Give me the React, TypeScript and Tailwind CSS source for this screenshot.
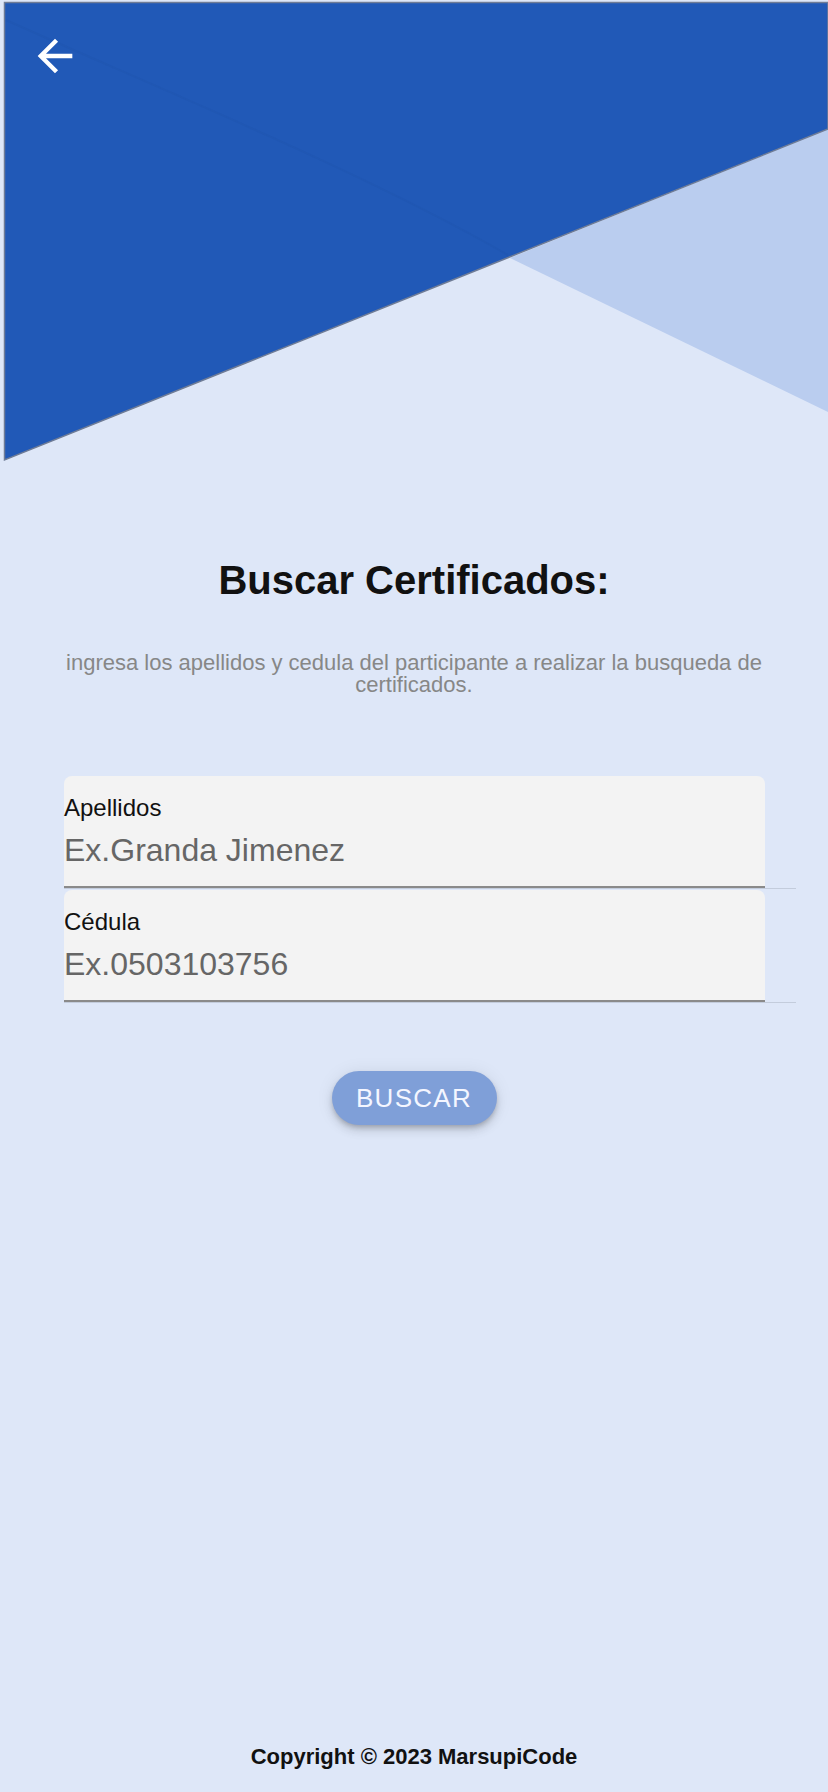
import { useState } from 'react';

const font = { fontFamily: '"Liberation Sans", Arial, sans-serif' };

function HeaderShapes() {
  return (
    <svg className="absolute inset-0 h-full w-full" viewBox="0 0 828 462" preserveAspectRatio="none">
      <polygon points="510,258 828,129 828,412" fill="#bacdef" />
      <polygon
        points="4.5,2.5 828,2.5 828,129 4.5,460"
        fill="#2159b7"
        stroke="#6f7c96"
        strokeWidth="1.5"
      />
      <path d="M6 20 C 150 85, 360 170, 508 255" fill="none" stroke="#174c9f" strokeOpacity="0.12" strokeWidth="2" />
    </svg>
  );
}

interface FieldProps {
  label: string;
  placeholder: string;
}

function Field({ label, placeholder }: FieldProps) {
  const [value, setValue] = useState('');
  return (
    <div className="w-[732px] border-b border-[#c3ccdc]">
      <label className="flex w-[701px] flex-col rounded-t-[8px] border-b-2 border-[#8a8a8a] bg-[#f3f3f3] pt-[18px] pb-[16px]">
        <span className="text-[24px] leading-[28px] text-[#111]">{label}</span>
        <input
          value={value}
          onChange={(e) => setValue(e.target.value)}
          placeholder={placeholder}
          className="mt-[8px] h-[40px] w-full bg-transparent p-0 text-[32px] leading-[40px] text-[#222] outline-none placeholder:text-[#666]"
          style={font}
        />
      </label>
    </div>
  );
}

export default function App() {
  return (
    <div className="flex min-h-[1792px] w-full flex-col bg-[#dee7f8]" style={font}>
      <div className="relative h-[462px] w-full">
        <HeaderShapes />
        <button className="absolute left-[29px] top-[30px] h-[52px] w-[52px]" aria-label="Volver">
          <svg viewBox="0 0 24 24" className="h-[52px] w-[52px]" fill="#ffffff">
            <path d="M20 11H7.83l5.59-5.59L12 4l-8 8 8 8 1.41-1.41L7.83 13H20v-2z" />
          </svg>
        </button>
      </div>

      <div className="mx-auto flex w-[700px] flex-col items-center">
        <h1 className="mt-[95px] text-center text-[40px] font-bold leading-[46px] text-[#111]">
          Buscar Certificados:
        </h1>
        <p className="mt-[49px] text-center text-[22px] leading-[22px] text-[#878787]">
          ingresa los apellidos y cedula del participante a realizar la busqueda de certificados.
        </p>

        <div className="mt-[80px] flex w-full flex-col gap-[1px]">
          <Field label="Apellidos" placeholder="Ex.Granda Jimenez" />
          <Field label="Cédula" placeholder="Ex.0503103756" />
        </div>

        <button className="mt-[68px] flex h-[54px] w-[165px] items-center justify-center rounded-full bg-[#7f9fd8] text-[26px] tracking-[0.05em] text-[#f4f6ff] shadow-[0_3px_5px_-1px_rgba(0,0,0,0.2),0_6px_10px_0_rgba(0,0,0,0.1),0_1px_18px_0_rgba(0,0,0,0.08)]">
          BUSCAR
        </button>
      </div>

      <div className="flex-1" />

      <footer className="pb-[22px] text-center text-[22px] font-bold leading-[26px] text-[#111]">
        Copyright © 2023 MarsupiCode
      </footer>
    </div>
  );
}
